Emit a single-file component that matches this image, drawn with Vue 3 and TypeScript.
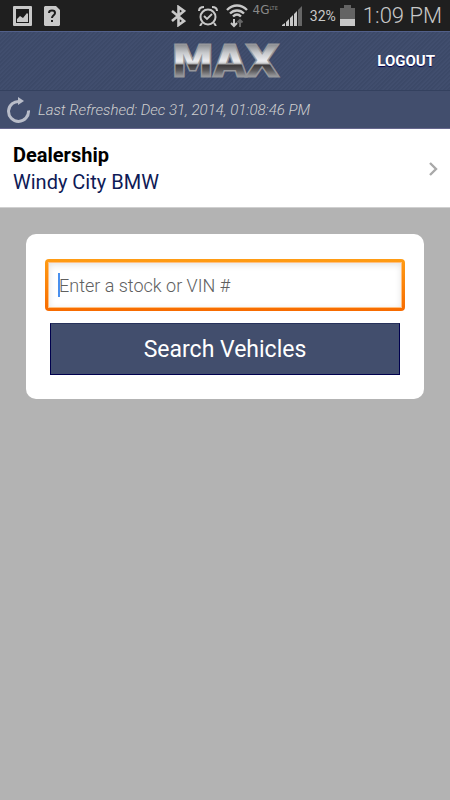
<script setup lang="ts">
import { ref } from 'vue'

const query = ref('')
const dealership = ref('Windy City BMW')
const refreshedAt = ref('Dec 31, 2014, 01:08:46 PM')
const battery = ref(32)
const clock = ref('1:09 PM')
</script>

<template>
  <div class="screen">
    <div class="status">
      <div class="status-group notices">
        <svg width="19" height="20" viewBox="0 0 19 20" aria-hidden="true">
          <rect x="0" y="0" width="19" height="20" rx="1" fill="#c8c8c8" />
          <rect x="3" y="3" width="13" height="14" fill="#1c1c1c" />
          <path d="M4 16V13L7 10L10 12L14 7L15 8V16Z" fill="#c8c8c8" />
        </svg>
        <svg width="16" height="20" viewBox="0 0 16 20" aria-hidden="true">
          <path d="M1 0H12L16 4V19L15 20H1L0 19V1Z" fill="#c8c8c8" />
          <path d="M5 7C5 3.8 11 3.8 11 7C11 9.3 8 9.2 8 12" fill="none" stroke="#1c1c1c" stroke-width="2" />
          <rect x="7" y="14" width="2" height="2" fill="#1c1c1c" />
        </svg>
      </div>
      <div class="status-group signals">
        <svg class="bluetooth" width="15" height="22" viewBox="0 0 15 22" aria-hidden="true">
          <path d="M1 6L13 16L7.500 20V2L13 6L1 16" fill="none" stroke="#c8c8c8" stroke-width="2.600" />
        </svg>
        <svg class="alarm" width="20" height="20" viewBox="0 0 20 20" fill="none" stroke="#c8c8c8" aria-hidden="true">
          <circle cx="10" cy="11" r="7.500" stroke-width="2" />
          <path d="M6 10L9 13L14 8" stroke-width="1.800" />
          <path d="M1 5C1 2 3 1 6 1M19 5C19 2 17 1 14 1M4 17L2 20M16 17L18 20" stroke-width="2" />
        </svg>
        <svg class="wifi" width="22" height="24" viewBox="0 0 22 24" fill="none" aria-hidden="true">
          <path d="M1 6C7 0 15 0 21 6M4 9.500C8 5.500 14 5.500 18 9.500M7 12.500C9.500 10 12.500 10 15 12.500" stroke="#c8c8c8" stroke-width="2.400" />
          <path d="M8 15V22M5 19L8 22L11 19" stroke="#c8c8c8" stroke-width="2" />
          <path d="M14 23V16M11.500 18.500L14 16L16.500 18.500" stroke="#666" stroke-width="2" />
        </svg>
        <span class="network">4G<span class="lte">LTE</span></span>
        <svg class="bars" width="20" height="21" viewBox="0 0 20 21" aria-hidden="true">
          <path d="M0 20L3 18V21H0ZM4 17L7 14V21H4ZM8 13L11 10V21H8ZM12 9L15 6V21H12Z" fill="#c8c8c8" />
          <path d="M16 5L20 1V21H16Z" fill="#666" />
        </svg>
        <span class="percent">{{ battery }}%</span>
        <svg class="battery" width="15" height="21" viewBox="0 0 15 21" aria-hidden="true">
          <path d="M0 3H4V0H11V3H15V15H0Z" fill="#636363" />
          <rect y="14" width="15" height="7" fill="#c8c8c8" />
        </svg>
        <span class="clock">{{ clock }}</span>
      </div>
    </div>

    <header class="header">
      <svg class="logo" width="134" height="52" viewBox="0 0 134 52" role="img" aria-label="MAX">
        <defs>
          <linearGradient id="metal" gradientUnits="userSpaceOnUse" x1="0" y1="10" x2="0" y2="42">
            <stop offset="0" stop-color="#8d8f93" />
            <stop offset="0.250" stop-color="#c8cacd" />
            <stop offset="0.500" stop-color="#ececef" />
            <stop offset="0.570" stop-color="#cfd0d2" />
            <stop offset="0.630" stop-color="#3d3a3c" />
            <stop offset="0.800" stop-color="#5c5b5e" />
            <stop offset="1" stop-color="#a0a1a4" />
          </linearGradient>
        </defs>
        <text x="67" y="41" text-anchor="middle" class="wordmark">MAX</text>
      </svg>
      <button class="logout" type="button">LOGOUT</button>
    </header>

    <div class="refresh-bar">
      <button class="refresh" type="button" aria-label="Refresh">
        <svg width="24" height="26" viewBox="0 0 24 26" aria-hidden="true">
          <path d="M21.500 13.500A10 10 0 1 1 13 4.500" fill="none" stroke="#b9bdc9" stroke-width="3" />
          <path d="M11 0L17 4L11 8Z" fill="#b9bdc9" />
        </svg>
      </button>
      <span class="refreshed">Last Refreshed: {{ refreshedAt }}</span>
    </div>

    <a class="dealership" href="#dealership">
      <span class="dealer-text">
        <strong>Dealership</strong>
        <span>{{ dealership }}</span>
      </span>
      <svg width="9" height="14" viewBox="0 0 9 14" aria-hidden="true">
        <path d="M1 1L7 7L1 13" fill="none" stroke="#a9a9a9" stroke-width="2.400" />
      </svg>
    </a>

    <main>
      <form class="card" @submit.prevent>
        <div class="field">
          <input v-model="query" type="text" aria-label="Stock or VIN number" placeholder="Enter a stock or VIN #" />
          <span v-if="!query" class="caret"></span>
        </div>
        <button class="search" type="submit">Search Vehicles</button>
      </form>
    </main>
  </div>
</template>

<style>
body {
  background: #b3b3b3;
}
</style>

<style scoped>
.screen {
  min-height: 100vh;
  font-family: Roboto, "Liberation Sans", sans-serif;
  background: #b3b3b3;
}
button {
  font-family: inherit;
  cursor: pointer;
}
svg {
  display: block;
  flex: none;
}
.status {
  display: flex;
  align-items: center;
  justify-content: space-between;
  height: 31px;
  padding: 0 8px 0 13px;
  background: #1f1f1f;
  color: #c8c8c8;
}
.status-group {
  display: flex;
  align-items: center;
}
.notices {
  gap: 12px;
}
.alarm {
  margin-left: 12px;
}
.wifi {
  margin-left: 8px;
}
.network {
  display: flex;
  align-self: flex-start;
  margin-left: 5px;
  font-family: "DejaVu Sans", sans-serif;
  font-size: 12px;
  line-height: 20px;
  color: #888;
}
.lte {
  font-size: 5px;
  line-height: 16px;
}
.bars {
  margin-left: 4px;
}
.percent {
  margin-left: 8px;
  font-size: 14px;
}
.battery {
  margin-left: 4px;
}
.clock {
  margin-left: 8px;
  font-size: 22px;
  line-height: 31px;
  font-weight: 300;
}
.header {
  display: grid;
  grid-template-columns: 1fr auto 1fr;
  align-items: center;
  height: 60px;
  padding: 0 15px;
  box-sizing: border-box;
  border-top: 1px solid #52608a;
  border-bottom: 1px solid #34415f;
  background: repeating-linear-gradient(135deg, #3c4968 0 1px, #414e6e 2px 3px);
}
.logo {
  grid-column: 2;
}
.wordmark {
  font-family: "DejaVu Sans", sans-serif;
  font-size: 42px;
  font-weight: 700;
  fill: url(#metal);
  stroke: #96979b;
  stroke-width: 3px;
  paint-order: stroke;
}
.logout {
  justify-self: end;
  padding: 0;
  border: 0;
  background: none;
  color: #fff;
  font-size: 15px;
  font-weight: 700;
  text-shadow: 0 1px 1px #00004d;
}
.refresh-bar {
  display: flex;
  align-items: center;
  gap: 7px;
  height: 38px;
  padding: 0 7px;
  box-sizing: border-box;
  border-bottom: 1px solid #66678d;
  background: #424e6d;
}
.refresh {
  padding: 0;
  border: 0;
  background: none;
}
.refreshed {
  color: #cfcfcf;
  font-size: 15px;
  font-style: italic;
  font-weight: 300;
}
.dealership {
  display: flex;
  align-items: center;
  justify-content: space-between;
  padding: 13px 12px 11px 13px;
  border-bottom: 1px solid #d0d0d0;
  background: #fff;
  color: #0e1a56;
  font-size: 20px;
  line-height: 27px;
  text-decoration: none;
}
.dealer-text {
  display: flex;
  flex-direction: column;
}
.dealer-text strong {
  color: #000;
}
main {
  padding: 26px;
}
.card {
  padding: 25px 19px 24px;
  border-radius: 10px;
  background: #fff;
}
.field {
  position: relative;
  padding: 4px;
  border-radius: 4px;
  background: linear-gradient(#ff9c14, #f76b00);
}
.field input {
  display: block;
  width: 100%;
  height: 44px;
  padding: 0 10px;
  box-sizing: border-box;
  border: 0;
  outline: 0;
  background: #fff;
  box-shadow: inset 0 2px 6px #e3e3e3, 0 0 0 1px #ffc080;
  color: #222;
  font-family: inherit;
  font-size: 18px;
}
.field input::placeholder {
  color: #606060;
  font-weight: 300;
  opacity: 1;
}
.caret {
  position: absolute;
  top: 14px;
  left: 13px;
  width: 2px;
  height: 24px;
  background: #4a90ee;
}
.field:focus-within .caret {
  display: none;
}
.search {
  display: block;
  width: calc(100% - 10px);
  height: 52px;
  margin: 12px 5px 0;
  padding: 0;
  border: 1px solid #00004d;
  border-top-color: #27325b;
  background: #424e6d;
  color: #fff;
  font-size: 23px;
}
</style>
